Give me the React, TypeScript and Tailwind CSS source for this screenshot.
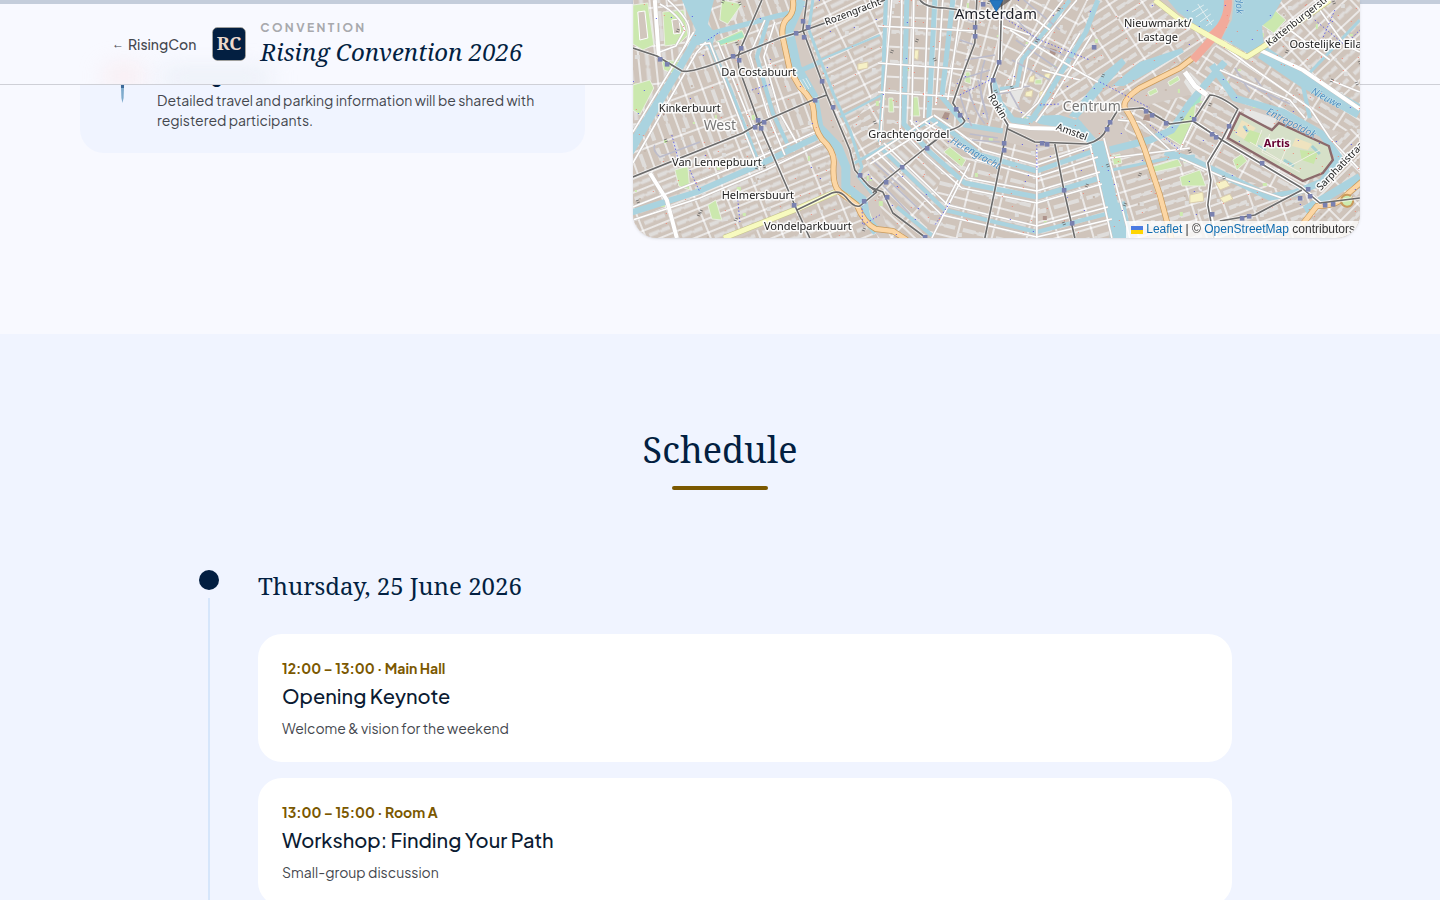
import React from "react";

type Pt = [number, number];

/* ---------- Map data (map units, origin at the left edge of the city plan) ---------- */

interface District {
  id: string;
  angle: number;
  w: number;
  h: number;
  area: string;
}

const districts: District[] = [
  { id: "nw", angle: 84, w: 38, h: 17, area: "M633 0H700L697 40L650 115L633 140Z" },
  { id: "costa", angle: 70, w: 36, h: 18, area: "M700 0H795L790 70L820 130L755 165L633 215V150L698 45Z" },
  { id: "helmers", angle: -22, w: 30, h: 13, area: "M633 178L745 133L822 128L840 190L730 238H633Z" },
  { id: "vondel", angle: -22, w: 22, h: 17, area: "M740 238L838 192L880 238Z" },
  { id: "jordaan", angle: -26, w: 37, h: 13, area: "M805 0H886L880 140L858 175L808 35Z" },
  { id: "jordaanS", angle: -30, w: 28, h: 16, area: "M846 135L883 80L886 150L866 185Z" },
  { id: "ringW", angle: 3, w: 24, h: 30, area: "M884 0H956L942 97L965 125L930 150L880 140Z" },
  { id: "ringSW", angle: 43, w: 37, h: 15, area: "M866 160L930 120L985 150L945 238H890Z" },
  { id: "ringS", angle: 14, w: 34, h: 20, area: "M953 128L1037 150V238H925Z" },
  { id: "ringSE", angle: -16, w: 34, h: 20, area: "M1037 148L1100 140L1118 238H1037Z" },
  { id: "inner", angle: 15, w: 13, h: 22, area: "M955 0H1004L990 100L1008 128L965 128L944 97Z" },
  { id: "wallen", angle: 27, w: 17, h: 26, area: "M1004 0H1090L1035 122L1012 118L994 95Z" },
  { id: "nieuw", angle: -33, w: 29, h: 16, area: "M1088 0H1155L1210 40L1122 105L1040 118Z" },
  { id: "planN", angle: 33, w: 29, h: 16, area: "M1185 65L1225 40L1360 108V138L1230 100Z" },
  { id: "plant", angle: 28, w: 31, h: 18, area: "M1118 112L1210 90L1345 175L1290 238H1170Z" },
  { id: "weesp", angle: -17, w: 30, h: 16, area: "M1104 155L1190 150L1210 238H1124Z" },
  { id: "plantS", angle: -20, w: 27, h: 16, area: "M1205 170L1300 195L1360 180V238H1195Z" },
  { id: "oost", angle: -43, w: 26, h: 17, area: "M1262 50L1335 0H1360V105Z" },
  { id: "katt", angle: -38, w: 28, h: 15, area: "M1275 0H1325L1264 44Z" },
  { id: "sarph", angle: -45, w: 24, h: 16, area: "M1325 140L1360 125V238H1310Z" },
];

const waterAreas = [
  "M682 0H714L708 24L716 34L712 46L697 45L633 155V135L686 50L696 30Z",
  "M1168 0H1227L1221 26L1207 33L1178 12Z",
  "M1234 0H1282L1272 18L1262 26L1264 44L1249 54L1222 38L1232 20Z",
  "M1078 118L1098 141L1104 141L1126 238H1113L1092 147L1070 126Z",
  "M1112 86L1140 62L1182 48L1184 52L1146 74L1124 86Z",
  "M1026 116L1060 115L1082 122L1080 131L1040 124Z",
  "M1110 205L1125 201L1132 238H1110Z",
  "M1104 73L1122 58L1126 63L1078 118L1069 116Z",
];

const canals: { d: string; w: number }[] = [
  { d: "M707 38L730 90L757 160", w: 5 },
  { d: "M713 33L777 16L795 12", w: 5 },
  { d: "M768 20L757 57L773 113L789 147", w: 4 },
  { d: "M630 213L697 192L763 163L817 137", w: 6 },
  { d: "M802 0L789 30L797 67L814 97L819 127L838 147L846 167L846 187L863 200L866 218L877 232", w: 9 },
  { d: "M813 0L809 30L834 95L850 130L862 167L858 176L874 196", w: 3 },
  { d: "M800 71L820 62", w: 5 },
  { d: "M820 60L880 35", w: 2 },
  { d: "M840 117L882 95", w: 2 },
  { d: "M853 164L930 121", w: 3 },
  { d: "M886 0L883 93L880 142", w: 4 },
  { d: "M907 0L904 124L930 152L965 183L1037 197L1100 178", w: 5 },
  { d: "M935 0L929 117L953 133L980 155L1037 171L1097 150", w: 5 },
  { d: "M953 0L942 97L965 125L1003 131", w: 5 },
  { d: "M880 147L945 210L1037 232L1110 213", w: 4 },
  { d: "M897 207L933 236", w: 4 },
  { d: "M1070 0L1022 60L1017 87L1000 89", w: 4 },
  { d: "M1098 0L1086 32L1043 103L1030 122", w: 5 },
  { d: "M992 77L1000 103L1013 120L1030 122", w: 6 },
  { d: "M1262 52L1303 80L1360 112", w: 14 },
  { d: "M1303 80L1360 20", w: 3 },
  { d: "M1225 62L1205 85L1190 103L1172 130L1150 140L1110 150", w: 7 },
  { d: "M1212 65L1235 98L1283 112L1322 134L1339 157L1322 182L1295 193L1270 197L1192 160L1165 152", w: 7 },
  { d: "M1303 85L1310 118", w: 4 },
  { d: "M1305 210L1330 195L1360 177", w: 8 },
  { d: "M1112 170L1170 158L1195 156", w: 3 },
];

const parks = [
  "M633 5L648 3L654 45L643 50L633 44Z",
  "M663 12L684 10L688 35L679 44L665 46Z",
  "M662 60L684 62L676 74L664 70Z",
  "M633 85L650 80L654 88L640 115L633 110Z",
  "M716 42L742 30L746 38L720 46Z",
  "M722 0L742 4L728 24L720 20Z",
  "M944 152L950 147L966 160L962 167Z",
  "M912 97L918 97L920 116L911 116Z",
  "M889 98L893 98L894 112L889 112Z",
  "M966 72L970 72L971 84L965 82Z",
  "M1035 80L1042 79L1042 84L1035 84Z",
  "M1180 115L1196 102L1194 124L1182 146L1162 133Z",
  "M1233 160L1242 154L1247 161L1237 170Z",
  "M1180 177L1200 170L1206 186L1182 186Z",
  "M1148 168L1178 159L1182 166L1150 173Z",
  "M1262 25L1275 10L1286 20L1274 33Z",
  "M845 190L858 196L860 203L850 199Z",
  "M864 205L869 210L874 224L866 218Z",
  "M708 205L716 200L722 220L712 219Z",
  "M675 170L688 166L690 190L679 186Z",
  "M1184 158L1190 155L1192 162L1184 163Z",
  "M1112 156L1120 154L1122 163L1114 165Z",
  "M1148 92L1156 88L1158 92L1150 96ZM1168 82L1178 76L1180 80L1170 86Z",
];

const lightGrounds = [
  "M1245 108L1277 119L1273 128L1243 117Z",
  "M1190 72L1200 82L1210 96L1196 100L1184 82Z",
  "M650 105L664 100L668 104L655 112Z",
  "M1010 85L1022 90L1018 108L1006 106Z",
  "M725 8L740 4L736 20L724 22Z",
];

const yellowYards = [
  "M1030 77L1035 75L1034 82L1029 82ZM1045 74L1051 73L1049 79L1044 79ZM1026 92L1033 90L1032 97L1025 96ZM1040 92L1046 90L1045 96L1040 97Z",
  "M1190 195L1203 192L1204 201L1190 203Z",
  "M1216 183L1226 180L1230 186L1220 190Z",
  "M660 92L668 86L671 91L663 98Z",
  "M858 64L868 62L868 68L858 70Z",
  "M915 50L919 50L918 60L914 58Z",
  "M1220 198L1230 194L1233 199L1224 203Z",
];

const darkYards = [
  "M945 112L950 113L948 120L942 118Z",
  "M1050 48L1057 50L1055 56L1050 54Z",
  "M1145 115L1150 114L1150 121L1143 120Z",
  "M1043 216L1047 216L1047 220L1043 220Z",
  "M662 113L666 112L664 116Z",
];

const whiteRoads: { d: string; w: number }[] = [
  { d: "M655 0L659 57", w: 4 },
  { d: "M650 173L667 200L677 238", w: 4 },
  { d: "M633 163L697 52L706 42", w: 2 },
  { d: "M633 132L684 48L694 32", w: 2 },
  { d: "M700 45L710 43L745 133L760 170", w: 2 },
  { d: "M718 42L765 158", w: 2 },
  { d: "M765 20L750 55L768 115L785 155", w: 2 },
  { d: "M775 22L764 57L780 113L797 143", w: 2 },
  { d: "M633 207L760 157L815 132", w: 2 },
  { d: "M633 220L700 198L766 170L822 143", w: 2 },
  { d: "M668 0C690 20 695 30 684 48", w: 2 },
  { d: "M660 4Q680 15 685 30L676 46L660 52", w: 2 },
  { d: "M880 145L892 0M900 130L902 0M912 125L914 0M924 118L928 0M936 105L943 0M948 100L962 0", w: 2 },
  { d: "M878 26L975 31M878 63L972 70M878 92L960 97", w: 2 },
  { d: "M900 128L926 156L962 188L1037 203L1102 184M910 120L934 148L968 178L1037 191L1100 172", w: 2 },
  { d: "M925 122L950 138L977 160L1037 177L1098 157M934 115L956 130L983 150L1037 165L1092 146", w: 2 },
  { d: "M877 152L942 215L1037 237L1112 219M884 143L948 205L1037 226L1108 207", w: 2 },
  { d: "M970 163L932 238M945 205L958 180M1037 150V238", w: 2 },
  { d: "M866 160L933 116M870 164L938 122", w: 2 },
  { d: "M1063 0L1017 60L1012 86M1077 0L1028 58L1022 88L1000 92", w: 2 },
  { d: "M1080 33L1038 103L1022 118M1092 35L1050 103L1036 122", w: 2 },
  { d: "M1010 30L1085 75L1098 82M1016 5L1050 30", w: 2 },
  { d: "M1000 25L1030 35M1042 70L1080 80", w: 2 },
  { d: "M1002 0L1000 60L990 85L992 100L1008 125L1030 128L1066 129", w: 4 },
  { d: "M1260 50L1303 70L1360 109", w: 4 },
  { d: "M1185 72L1195 86L1207 95", w: 5 },
  { d: "M1207 96L1193 122L1180 150M1218 96L1238 110L1226 138", w: 2 },
  { d: "M1090 144L1112 238M1104 138L1130 238", w: 2 },
  { d: "M1213 38L1250 66L1310 108L1330 138L1360 170", w: 2 },
  { d: "M1220 70L1290 100L1305 118", w: 2 },
  { d: "M1222 140L1208 163L1211 180L1208 205L1216 238", w: 4 },
  { d: "M1193 121L1222 140L1302 188L1320 203", w: 4 },
  { d: "M1180 158L1225 178L1282 198L1310 190", w: 2 },
  { d: "M1118 120L1140 122L1170 150M1110 158L1190 148", w: 2 },
  { d: "M1320 10L1345 45L1360 52M1290 30L1330 60M1330 80L1360 92", w: 2 },
];

const servicePaths = [
  "M960 95Q968 120 972 126M968 88Q974 110 985 124M978 80L988 120M958 80L990 70M965 60L995 55",
  "M985 60Q975 90 988 115M992 95L1010 92L1020 110M1005 90L1030 86",
  "M890 168L930 200M884 176L920 210M880 182L910 214M872 160L905 190",
  "M655 145Q652 150 660 157L700 142M742 120Q740 128 746 132",
  "M1024 0L1060 30M1010 12L1040 45L1075 60M1016 40L1060 70M1012 60L1050 80",
  "M955 15L975 22M960 40L975 45",
  "M972 140L1000 142M970 134L998 138",
  "M1228 75L1290 104M1235 68L1250 92M1255 78L1272 100",
];

const trams = [
  "M633 48L657 56L682 71Q690 73 717 63L738 55L780 38L800 32L850 14L885 0",
  "M762 0L741 48Q737 56 739 68L759 123L797 210L810 238",
  "M633 177L743 133L760 123L813 100L827 95",
  "M807 0L803 30L827 95L850 150L855 170L868 185L877 192",
  "M797 210L832 193Q840 190 846 197Q854 208 860 206L877 192",
  "M977 0L975 43L962 77L953 103L965 121Q962 127 948 131L927 147L886 180L873 193",
  "M1002 0L1000 60L991 84L993 100L1008 125L1003 150L995 190L985 238",
  "M1008 129L1035 142L1087 144Q1103 140 1107 128L1118 110L1143 108L1170 124L1193 121L1222 140L1302 188L1320 203L1360 198",
  "M1055 144L1064 190L1075 238",
  "M870 187L883 192L893 213L925 237",
  "M920 0Q926 8 945 8L975 12",
  "M1222 140L1208 163L1211 180L1208 205L1214 238",
  "M1222 140L1238 109Q1220 95 1210 95L1193 121",
  "M1302 190L1255 215L1220 221",
];

const stops: Pt[] = [
  [660, 59], [667, 64], [741, 48], [733, 56], [739, 60], [758, 120], [764, 122], [755, 127], [761, 128], [796, 33],
  [808, 27], [804, 37], [803, 21], [822, 81], [833, 107], [815, 100], [794, 205], [860, 175], [864, 201], [975, 27],
  [975, 36], [983, 4], [993, 80], [1094, 47], [999, 62], [956, 109], [960, 115], [927, 148], [902, 167], [886, 182],
  [887, 197], [1004, 143], [1004, 150], [1042, 143], [1047, 144], [1064, 190], [1072, 223], [1110, 122], [1107, 129],
  [1146, 111], [1152, 115], [1194, 119], [1212, 134], [1216, 137], [1229, 126], [1262, 163], [1300, 198], [1308, 189],
  [1310, 196], [1325, 205], [1333, 204], [1242, 218], [1249, 216], [1212, 214], [1166, 123], [925, 237],
];

const labels: { text: string; x: number; y: number; size?: number; rotate?: number; kind?: "city" | "area" | "water" | "zoo" }[] = [
  { text: "Amsterdam", x: 996, y: 19, kind: "city" },
  { text: "Nieuwmarkt/", x: 1158, y: 27 },
  { text: "Lastage", x: 1158, y: 41 },
  { text: "Oostelijke Eilanden", x: 1339, y: 48 },
  { text: "Da Costabuurt", x: 759, y: 76 },
  { text: "Kinkerbuurt", x: 690, y: 112 },
  { text: "West", x: 720, y: 130, kind: "area" },
  { text: "Centrum", x: 1092, y: 111, kind: "area" },
  { text: "Grachtengordel", x: 909, y: 138 },
  { text: "Van Lennepbuurt", x: 717, y: 166 },
  { text: "Helmersbuurt", x: 758, y: 199 },
  { text: "Vondelparkbuurt", x: 808, y: 230 },
  { text: "Artis", x: 1277, y: 147, kind: "zoo" },
  { text: "Rozengracht", x: 854, y: 15, size: 10, rotate: -21 },
  { text: "Rokin", x: 995, y: 108, size: 10, rotate: 58 },
  { text: "Amstel", x: 1071, y: 135, size: 10, rotate: 20 },
  { text: "Kattenburgerstraat", x: 1305, y: 19, size: 10, rotate: -38 },
  { text: "Sarphatistraat", x: 1344, y: 167, size: 10, rotate: -46 },
  { text: "Herengracht", x: 974, y: 156, size: 10, rotate: 29, kind: "water" },
  { text: "Entrepotdok", x: 1290, y: 126, size: 10, rotate: 27, kind: "water" },
  { text: "Nieuwe", x: 1325, y: 101, size: 10, rotate: 28, kind: "water" },
  { text: "dok", x: 1236, y: 6, size: 10, rotate: 85, kind: "water" },
];

const labelStyles = {
  place: "fill-[#222222] stroke-white/90",
  city: "fill-[#20222a] stroke-white/90",
  area: "fill-[#777777] stroke-white/90",
  water: "fill-[#4d8fc0] stroke-white/40 italic",
  zoo: "fill-[#660033] stroke-white/80 font-bold",
};

/* Deterministic scatter of entrances, bollards and small courtyards. */
function scatter(count: number, seed: number): Pt[] {
  let s = seed;
  const next = () => {
    s = (s * 16807) % 2147483647;
    return s / 2147483647;
  };
  return Array.from({ length: count }, () => [633 + Math.round(next() * 727), Math.round(next() * 238)] as Pt);
}

const redDots = scatter(420, 71);
const greyYards = scatter(240, 1913);
const greenYards = scatter(50, 409);
const bridges = scatter(40, 5501);
const dashedPaths = [
  "M708 40L720 32", "M752 90L772 84", "M672 135L678 158", "M690 170L700 192", "M738 200L740 222",
  "M862 205L863 225L880 215", "M1037 145V170", "M950 203L935 225", "M1000 15L1040 40L1090 60",
  "M960 95L990 80", "M1100 82L1150 108", "M1150 125L1180 150", "M1315 20L1345 45L1360 30", "M1335 10L1320 45",
  "M1040 105L1060 104",
];

function CityMap() {
  return (
    <svg
      viewBox="633 0 727 238"
      preserveAspectRatio="xMidYMax slice"
      className="block h-[238px] w-full"
      role="img"
      aria-label="Street map of central Amsterdam"
      fontFamily='"Noto Sans", sans-serif'
    >
      <defs>
        {districts.map((d) => (
          <pattern
            key={d.id}
            id={`blocks-${d.id}`}
            width={d.w}
            height={d.h}
            patternUnits="userSpaceOnUse"
            patternTransform={`rotate(${d.angle})`}
          >
            <rect width={d.w} height={d.h} fill="#ffffff" />
            <rect x="0.9" y="0.9" width={d.w - 1.8} height={d.h - 1.8} fill="#cfc4bb" stroke="#c8c2bf" strokeWidth="0.4" />
            <path
              d={`M4 ${d.h / 2 - 2}h${d.w / 2 - 4}v1h3v-1h${d.w / 2 - 7}v4h-${d.w / 3}v-1h-3v1H4Z`}
              fill="#dfdddb"
            />
          </pattern>
        ))}
      </defs>
      <rect x="633" width="727" height="238" fill="#d3cac3" />
      {districts.map((d) => (
        <path key={d.id} d={d.area} fill={`url(#blocks-${d.id})`} />
      ))}
      {greyYards.map(([x, y], i) => (
        <rect key={i} x={x} y={y} width={2 + (i % 3)} height={2 + (i % 3)} fill={i % 3 ? "#dedddc" : "#c6b9af"} />
      ))}
      {greenYards.map(([x, y], i) => (
        <rect key={i} x={x} y={y} width={2 + (i % 3)} height={2 + (i % 4)} fill="#cdebb0" />
      ))}
      {lightGrounds.map((d) => (
        <path key={d} d={d} fill="#e6e6e4" />
      ))}
      {parks.map((d) => (
        <path key={d} d={d} fill="#cbe8ae" stroke="#e8eee0" strokeWidth="1" />
      ))}
      {yellowYards.map((d) => (
        <path key={d} d={d} fill="#f6f1c6" stroke="#dccfb0" strokeWidth="1" />
      ))}
      {darkYards.map((d) => (
        <path key={d} d={d} fill="#ad938b" />
      ))}
      <path d="M638 12L645 11L648 38L640 40ZM672 20L679 19L681 33L674 34Z" fill="#d1c6bd" stroke="#ffffff" strokeWidth="1" />
      <path d="M717 42L742 32L744 37L719 45ZM1190 101L1202 94L1200 102L1192 107Z" fill="#a5e3c9" />
      <g fill="#aad3df">
        {waterAreas.map((d) => (
          <path key={d} d={d} />
        ))}
      </g>
      <g fill="none" strokeLinejoin="round">
        {canals.map((c) => (
          <path key={c.d} d={c.d} stroke="#aad3df" strokeWidth={c.w} />
        ))}
        {servicePaths.map((d) => (
          <path key={d} d={d} stroke="#bcbccb" strokeWidth="1.6" />
        ))}
        {whiteRoads.map((r) => (
          <path key={r.d} d={r.d} stroke="#c8c3c0" strokeWidth={r.w + 0.6} />
        ))}
        {whiteRoads.map((r) => (
          <path key={r.d} d={r.d} stroke="#ffffff" strokeWidth={r.w > 2 ? r.w : 1.6} />
        ))}
        <path
          d="M1155 0L1178 18L1213 38L1247 57L1263 47L1330 0M724 238L797 209L838 191L850 198"
          stroke="#c6c48c"
          strokeWidth="6"
        />
        <path
          d="M1155 0L1178 18L1213 38L1247 57L1263 47L1330 0M724 238L797 209L838 191L850 198"
          stroke="#f7fabf"
          strokeWidth="5"
        />
        <path
          d="M793 0Q795 13 787 19Q781 25 783 38L790 70L800 87Q814 100 814 112Q814 128 822 139Q834 150 834 162Q832 186 840 192L857 205Q864 223 876 229L893 231L907 240M1193 58L1180 68L1140 88Q1122 100 1125 108Q1133 118 1145 150L1160 195L1172 240M1364 180L1343 198Q1336 206 1317 206L1302 225"
          stroke="#c99a5b"
          strokeWidth="6"
        />
        <path
          d="M793 0Q795 13 787 19Q781 25 783 38L790 70L800 87Q814 100 814 112Q814 128 822 139Q834 150 834 162Q832 186 840 192L857 205Q864 223 876 229L893 231L907 240M1193 58L1180 68L1140 88Q1122 100 1125 108Q1133 118 1145 150L1160 195L1172 240M1364 180L1343 198Q1336 206 1317 206L1302 225"
          stroke="#fcd6a4"
          strokeWidth="4.6"
        />
        <path d="M1228 0Q1229 14 1221 26L1213 38L1193 60" stroke="#f2aa9b" strokeWidth="8" />
        <path d="M1224 18L1206 36L1220 42L1230 20Z" fill="#f2aa9b" />
        <path d="M1204 33L1213 38L1226 45" stroke="#f7fabf" strokeWidth="5" />
        <path d="M1352 197A6 6 0 1 1 1351 196" stroke="#c99a5b" strokeWidth="2" fill="#cdebb0" />
      </g>
      {/* Zoo grounds */}
      <path
        d="M1240 113L1272 130L1279 123L1329 146L1333 160L1323 173L1303 181L1228 138Z"
        fill="#d6e0c8"
        stroke="#8c6a6c"
        strokeWidth="2.4"
      />
      <path d="M1242 120L1256 128L1246 140L1235 134ZM1296 138L1312 144L1308 150L1292 146Z" fill="#efe3bf" />
      <path d="M1250 130L1262 134L1256 146L1244 140ZM1300 150L1318 152L1314 164L1302 160Z" fill="#c9e6a8" />
      <path d="M1258 146L1266 150M1284 160L1294 166M1312 146L1320 154M1244 126L1248 132" stroke="#a3cfd2" strokeWidth="3" />
      <path d="M1250 142L1290 166L1320 150M1262 130L1256 146M1290 140L1280 164M1270 134L1262 152L1300 172" stroke="#f0efe4" strokeWidth="1" fill="none" />
      {/* Jetties in the harbour */}
      <path d="M1192 12L1204 5M1196 17L1208 9M1200 22L1211 14M1206 26L1214 20M1198 4L1212 25" stroke="#e1eef0" strokeWidth="1" />
      <path d="M800 80L806 90M803 79L809 89M806 78L811 87" stroke="#e1eef0" strokeWidth="1" />
      {redDots.map(([x, y], i) => (
        <rect key={i} x={x} y={y} width="1" height="1" fill={i % 4 === 0 ? "#5555e8" : "#f08a7a"} />
      ))}
      {bridges.map(([x, y], i) => (
        <path
          key={i}
          d={i % 2 ? `M${x} ${y}l3 1m-4 1l3 1` : `M${x} ${y}l3 -1m-2 3l3 -1`}
          stroke="#555555"
          strokeWidth="0.7"
          fill="none"
        />
      ))}
      <g fill="none" stroke="#4b4bea" strokeWidth="0.8" strokeDasharray="1.5 2">
        {dashedPaths.map((d) => (
          <path key={d} d={d} />
        ))}
      </g>
      <g fill="none" strokeLinejoin="round">
        {trams.map((d) => (
          <path key={d} d={d} stroke="#ffffff" strokeWidth="3.4" strokeOpacity="0.6" />
        ))}
        {trams.map((d) => (
          <path key={d} d={d} stroke="#6b6b6b" strokeWidth="1.6" />
        ))}
      </g>
      {stops.map(([x, y]) => (
        <rect key={`${x}-${y}`} x={x - 2} y={y - 2} width="4.6" height="4.6" fill="#7981b0" />
      ))}
      {labels.map((l) => (
        <text
          key={l.text}
          x={l.x}
          y={l.y}
          fontSize={l.size ?? (l.kind === "city" ? 15 : l.kind === "area" ? 14 : 11)}
          textAnchor="middle"
          strokeWidth={l.kind === "water" ? 1 : 3}
          strokeLinejoin="round"
          paintOrder="stroke"
          transform={l.rotate ? `rotate(${l.rotate} ${l.x} ${l.y})` : undefined}
          className={labelStyles[l.kind ?? "place"]}
        >
          {l.text}
        </text>
      ))}
      {/* Location marker, its tip above the city name */}
      <path d="M1002 0H1011L998 9Z" fill="#4a4545" fillOpacity="0.7" />
      <path d="M990 0H1003Q1000 6 996.5 11.5Q993 6 990 0Z" fill="#2676bf" stroke="#1c65ab" strokeWidth="0.8" />
    </svg>
  );
}

function PinIcon() {
  return (
    <svg viewBox="0 0 37 42" className="h-[42px] w-[37px] shrink-0" aria-hidden="true">
      <path d="M16.7 18H20.3L19.6 36L18.5 41L17.4 36Z" fill="#7fabcd" />
      <path d="M17 18H20V26H17Z" fill="#3c6a99" />
      <circle cx="18.5" cy="11" r="9" fill="#e0393e" />
    </svg>
  );
}

function Logo() {
  return (
    <svg viewBox="0 0 34 34" className="size-[34px] shrink-0" role="img" aria-label="RC">
      <rect x="0.5" y="0.5" width="33" height="33" rx="5" fill="#031f41" stroke="#b9ae9c" strokeWidth="0.6" />
      <text
        x="17"
        y="23"
        textAnchor="middle"
        fontSize="18"
        fontWeight="700"
        fontFamily='"Noto Serif", "Liberation Serif", serif'
        fill="#ecd9cd"
      >
        RC
      </text>
    </svg>
  );
}

function SiteHeader() {
  return (
    <header className="fixed inset-x-0 top-0 z-10 overflow-hidden border-b border-[#cfd0d7] bg-[#f8f9ff]">
      <div className="h-1 bg-[#c4cddb]" />
      <div className="relative mx-auto flex h-20 max-w-7xl items-center px-8">
        <div aria-hidden="true" className="absolute bottom-0 left-6 h-4 w-10 rounded-full bg-[#fbdcdc]/60 blur-md" />
        <div aria-hidden="true" className="absolute bottom-0 left-20 h-3 w-28 rounded-full bg-[#dce5ee]/80 blur-md" />
        <a href="#home" className="relative flex items-center gap-1 text-sm font-medium text-[#44474e]">
          <span className="font-['Liberation_Sans',sans-serif] text-xs">←</span>
          RisingCon
        </a>
        <a href="#top" className="relative ml-4 flex items-center gap-3.5">
          <Logo />
          <span className="flex flex-col">
            <span className="text-xs leading-4 font-bold tracking-[0.2em] text-[#a8a9ad]">CONVENTION</span>
            <span className="font-['Noto_Serif','Liberation_Serif',serif] text-2xl leading-8 text-[#031f41] italic">
              Rising Convention 2026
            </span>
          </span>
        </a>
      </div>
    </header>
  );
}

const sessions = [
  { time: "12:00 – 13:00 · Main Hall", title: "Opening Keynote", text: "Welcome & vision for the weekend" },
  { time: "13:00 – 15:00 · Room A", title: "Workshop: Finding Your Path", text: "Small-group discussion" },
];

export default function App() {
  return (
    <div
      id="top"
      className="h-screen overflow-hidden bg-[#f0f4ff] font-['Plus_Jakarta_Sans','Inter',sans-serif] text-[#44474e]"
    >
      <SiteHeader />
      <main>
        <section aria-label="Location" className="bg-[#f8f9ff] px-6 pb-24">
          <div className="mx-auto grid max-w-7xl grid-cols-12 items-start gap-12">
            <div className="col-span-5 rounded-b-3xl bg-[#f0f4ff] px-6 pt-[62px] pb-[23px]">
              <div className="flex items-start gap-4">
                <PinIcon />
                <div>
                  <h3 className="text-lg leading-7 font-bold text-[#031f41]">Parking</h3>
                  <p className="text-sm leading-5">
                    Detailed travel and parking information will be shared with registered participants.
                  </p>
                </div>
              </div>
            </div>
            <div className="relative z-20 col-span-7 overflow-hidden rounded-b-3xl shadow-sm">
              <CityMap />
              <div className="absolute right-0 bottom-0 flex items-center bg-white/80 px-[5px] font-['Liberation_Sans',sans-serif] text-xs leading-[17px] text-[#333333]">
                <svg viewBox="0 0 12 8" className="mr-[3px] h-2 w-3" aria-hidden="true">
                  <path fill="#4c7be1" d="M0 0h12v4H0z" />
                  <path fill="#ffd500" d="M0 4h12v4H0z" />
                </svg>
                <p>
                  <a href="#leaflet" className="text-[#0f6cb0]">Leaflet</a> | ©{" "}
                  <a href="#osm" className="text-[#0f6cb0]">OpenStreetMap</a> contributors
                </p>
              </div>
            </div>
          </div>
        </section>

        <section aria-labelledby="schedule" className="px-6 py-24">
          <div className="mx-auto max-w-5xl">
            <h2
              id="schedule"
              className="text-center font-['Noto_Serif','Liberation_Serif',serif] text-4xl leading-10 text-[#031f41]"
            >
              Schedule
            </h2>
            <div className="mx-auto mt-4 mb-20 h-1 w-24 rounded-full bg-[#7b5800]" />
            <div className="flex gap-12">
              <div className="flex w-0.5 flex-col items-center gap-2">
                <span className="size-5 shrink-0 rounded-full bg-[#031f41]" />
                <span className="w-0.5 flex-1 bg-[#d6e6fb]" />
              </div>
              <div className="flex-1 pb-20">
                <h3 className="mb-8 font-['Noto_Serif','Liberation_Serif',serif] text-2xl leading-8 text-[#031f41]">
                  Thursday, 25 June 2026
                </h3>
                <div className="flex flex-col gap-4">
                  {sessions.map((s) => (
                    <article key={s.title} className="rounded-3xl bg-white p-6">
                      <p className="text-sm leading-5 font-bold text-[#7b5800]">{s.time}</p>
                      <h4 className="mt-1 text-xl leading-7 font-medium text-[#0b1b32]">{s.title}</h4>
                      <p className="mt-2 text-sm leading-5">{s.text}</p>
                    </article>
                  ))}
                </div>
              </div>
            </div>
          </div>
        </section>
      </main>
    </div>
  );
}
